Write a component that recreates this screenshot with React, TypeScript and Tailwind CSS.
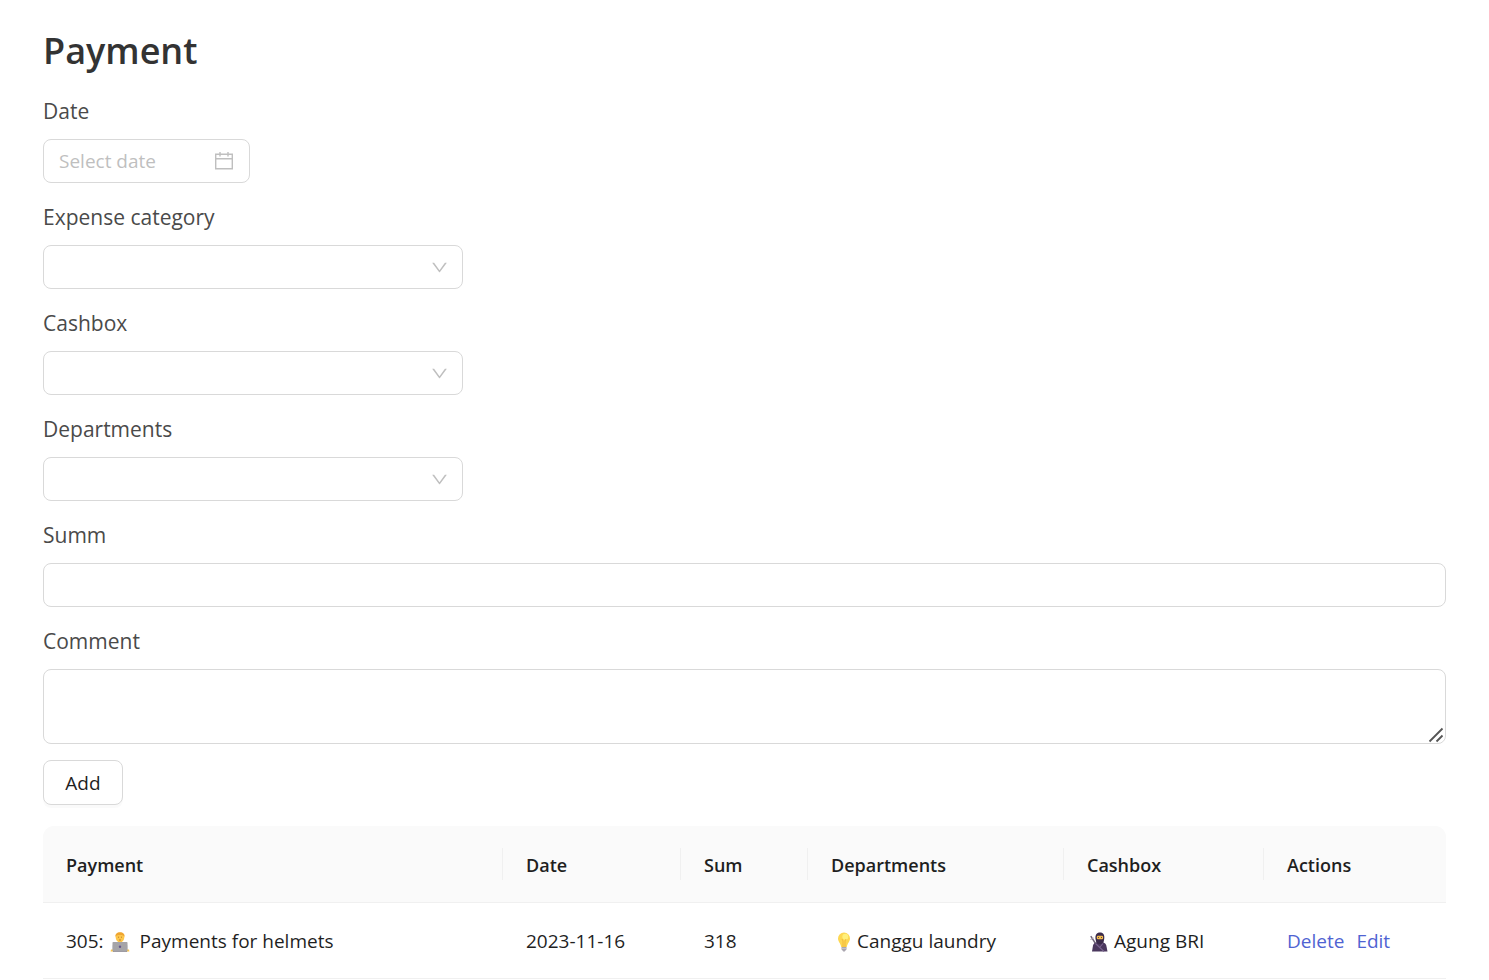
import React from 'react';

interface Payment {
  id: number;
  name: string;
  date: string;
  sum: number;
  department: string;
  cashbox: string;
}

const payments: Payment[] = [
  {
    id: 305,
    name: 'Payments for helmets',
    date: '2023-11-16',
    sum: 318,
    department: 'Canggu laundry',
    cashbox: 'Agung BRI'
  }
];

const columns = [
  { title: 'Payment', width: '' },
  { title: 'Date', width: 'w-[178px]' },
  { title: 'Sum', width: 'w-[127px]' },
  { title: 'Departments', width: 'w-[256px]' },
  { title: 'Cashbox', width: 'w-[200px]' },
  { title: 'Actions', width: 'w-[182px]' }
];

const selects = [
  { id: 'category', label: 'Expense category' },
  { id: 'cashbox', label: 'Cashbox' },
  { id: 'departments', label: 'Departments' }
];

function CalendarIcon() {
  return (
    <svg className="size-5 shrink-0" viewBox="0 0 20 20" stroke="#bfbfbf" strokeWidth="1.400" fill="none" aria-hidden="true">
      <path d="M1.700 3.200h16.600v14.600H1.700zM1.700 7.800h16.600M6 1v4.500M14 1v4.500" />
    </svg>
  );
}

function DownIcon() {
  return (
    <svg className="size-[17px]" viewBox="64 64 896 896" fill="#bfbfbf" aria-hidden="true">
      <path d="M884 256h-75c-5.100 0-9.900 2.500-12.900 6.600L512 654.200 227.900 262.600c-3-4.100-7.800-6.600-12.900-6.600h-75c-6.500 0-10.300 7.400-6.500 12.700l352.600 486.100c12.800 17.600 39 17.600 51.700 0l352.600-486.100c3.900-5.300.1-12.700-6.400-12.700z" />
    </svg>
  );
}

function TechnologistIcon() {
  return (
    <svg className="h-5 w-5" viewBox="0 0 20 20" aria-hidden="true">
      <path d="M2 18v-3c0-3 2-4 5-4h6c3 0 5 1 5 4v3z" fill="#e5e7ea" />
      <path d="M8 8h4v4H8z" fill="#e9a92e" />
      <ellipse cx="10" cy="5.500" rx="4.300" ry="4.800" fill="#fdc64b" />
      <path d="M5.400 5C5 2 7 .3 10 .3S15 2 14.600 5c-.8-1.400-1.800-2-4.600-2S6.200 3.600 5.400 5z" fill="#efa52f" />
      <path d="M8 5.200h1M11 5.200h1M9 8h2" stroke="#a96c2a" strokeWidth=".8" />
      <path d="M1 17.500h3v2H.6zM16 17.500h3l.4 2H16z" fill="#fdc64b" />
      <rect x="2.500" y="10" width="15" height="9.500" rx=".8" fill="#a5a4a8" />
      <path d="M3 19h14v.7H3z" fill="#88858e" />
      <circle cx="10" cy="14.700" r="1.200" fill="#66578a" />
    </svg>
  );
}

function BulbIcon() {
  return (
    <svg className="h-5 w-3.5" viewBox="0 0 14 20" aria-hidden="true">
      <path d="M7 .5a6 6 0 0 0-6 6c0 3 2.500 4.500 3.200 8.500h5.600C10.500 11 13 9.500 13 6.500a6 6 0 0 0-6-6z" fill="#fdd752" />
      <circle cx="8.300" cy="4.700" r="3" fill="#fff07c" />
      <path d="M5 7l1 2v6M9 7L8 9v6" stroke="#f0b63b" strokeWidth=".9" fill="none" />
      <path d="M4.500 15h5v2.500l-1 1-.7 1H6.200l-.7-1-1-1z" fill="#aaa6af" />
      <path d="M4.500 16.500h5" stroke="#d0ced4" strokeWidth=".7" />
    </svg>
  );
}

function NinjaIcon() {
  return (
    <svg className="h-5 w-[18px]" viewBox="0 0 18 20" aria-hidden="true">
      <path d="M.8 4.200l5 7.800" stroke="#6c6175" strokeWidth="1.400" />
      <path d="M.5 7.500l3-1.500" stroke="#9b92a3" strokeWidth="1" />
      <path d="M2 19.500l1-6c.4-2 2-3 4-3h5c2.500 0 3.800 1 4.300 3l1.200 6z" fill="#4b385e" />
      <path d="M5.500 7C5 3 6.500.5 10 .5S14.700 3 14.200 7l-.8 4c-2 1.500-5 1.500-7 0z" fill="#3b2b4b" />
      <rect x="6.800" y="3.700" width="6.300" height="3.600" rx="1.200" fill="#f5bd4b" />
      <path d="M8 5.500h1M11 5.500h1" stroke="#3b2b4b" strokeWidth=".8" />
      <path d="M5.500 11.500l8.500 8M13 11.500l-3 3.500" stroke="#79638e" strokeWidth="1.100" />
    </svg>
  );
}

function Label({ htmlFor, children }: { htmlFor: string; children: React.ReactNode }) {
  return (
    <label htmlFor={htmlFor} className="mb-3 block w-fit text-[21px] leading-8 text-[#4a4a4a]">
      {children}
    </label>
  );
}

export default function App() {
  return (
    <main className="bg-white px-[43px] pt-6 font-['Open_Sans','Noto_Sans',sans-serif] text-[19px] text-[#1f1f1f]">
      <h1 className="mb-[17px] text-4xl leading-[54px] font-semibold text-[#333]">Payment</h1>

      <form className="flex flex-col gap-[18px]" onSubmit={e => e.preventDefault()}>
        <div>
          <Label htmlFor="date">Date</Label>
          <div className="flex h-11 w-[207px] items-center rounded-lg border border-[#d9d9d9] px-[15px]">
            <input
              id="date"
              type="text"
              placeholder="Select date"
              className="min-w-0 flex-1 bg-transparent outline-none placeholder:text-[#bfbfbf]"
            />
            <CalendarIcon />
          </div>
        </div>

        {selects.map(select => (
          <div key={select.id}>
            <Label htmlFor={select.id}>{select.label}</Label>
            <div className="relative w-[420px] max-w-full">
              <select
                id={select.id}
                defaultValue=""
                className="block h-11 w-full appearance-none rounded-lg border border-[#d9d9d9] bg-white px-4 outline-none"
              >
                <option value=""></option>
              </select>
              <span className="pointer-events-none absolute inset-y-0 right-[15px] flex items-center">
                <DownIcon />
              </span>
            </div>
          </div>
        ))}

        <div>
          <Label htmlFor="summ">Summ</Label>
          <input id="summ" type="text" className="block h-11 w-full rounded-lg border border-[#d9d9d9] px-4 outline-none" />
        </div>

        <div>
          <Label htmlFor="comment">Comment</Label>
          <div className="relative">
            <textarea
              id="comment"
              className="block h-[75px] w-full resize-none rounded-lg border border-[#d9d9d9] px-4 py-1.5 outline-none"
            />
            <svg className="pointer-events-none absolute right-0.5 bottom-px size-4" viewBox="0 0 16 16" aria-hidden="true">
              <path d="M1.500 14.500L14.500 1.500M8.500 14.500l6-6" stroke="#555" strokeWidth="1.800" />
            </svg>
          </div>
          <button
            type="submit"
            className="mt-4 h-[45px] w-20 rounded-lg border border-[#d9d9d9] bg-white pt-0.5 shadow-[0_3px_0_rgba(0,0,0,0.02)]"
          >
            Add
          </button>
        </div>
      </form>

      <table className="mt-[21px] w-full table-fixed border-separate border-spacing-0 text-left">
        <thead>
          <tr>
            {columns.map((column, index) => (
              <th
                key={column.title}
                className={`h-[77px] border-b border-[#f0f0f0] bg-[#fafafa] p-0 text-lg font-semibold first:rounded-tl-[11px] last:rounded-tr-[11px] ${column.width}`}
              >
                <div
                  className={`flex h-8 items-center pt-0.5 pl-[23px] ${
                    index < columns.length - 1 ? 'border-r border-[#f0f0f0]' : ''
                  }`}
                >
                  {column.title}
                </div>
              </th>
            ))}
          </tr>
        </thead>
        <tbody>
          {payments.map(payment => (
            <tr
              key={payment.id}
              className="[&>td]:h-[76px] [&>td]:border-b [&>td]:border-[#f0f0f0] [&>td]:pt-0.5 [&>td]:pl-[23px]"
            >
              <td>
                <div className="flex items-center">
                  {payment.id}:
                  <span className="mr-2.5 ml-1.5">
                    <TechnologistIcon />
                  </span>
                  {payment.name}
                </div>
              </td>
              <td>{payment.date}</td>
              <td>{payment.sum}</td>
              <td>
                <div className="flex items-center gap-1.5 pl-1.5">
                  <BulbIcon />
                  {payment.department}
                </div>
              </td>
              <td>
                <div className="flex items-center gap-1.5 pl-[3px]">
                  <NinjaIcon />
                  {payment.cashbox}
                </div>
              </td>
              <td>
                <div className="flex gap-3 text-[#4f63d2]">
                  <a href="#delete">Delete</a>
                  <a href="#edit">Edit</a>
                </div>
              </td>
            </tr>
          ))}
        </tbody>
      </table>
    </main>
  );
}
